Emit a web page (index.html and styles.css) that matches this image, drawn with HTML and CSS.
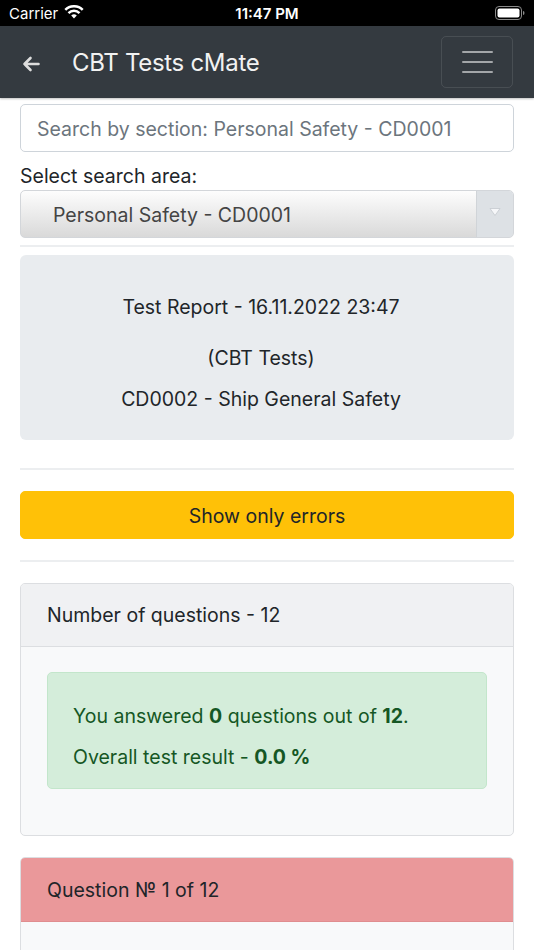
FILE: index.html
```html
<!DOCTYPE html>
<html>
<head>
<meta charset="utf-8">
<link rel="stylesheet" href="styles.css">
</head>
<body>
<div class="status">
  <div class="status-left">Carrier
    <svg class="wifi" width="20" height="14" viewBox="0 0 20 14"><path d="M10 13.5 L7.2 10.6 A4 4 0 0 1 12.8 10.6 Z" fill="#fff"/><path d="M3.6 7.2 A9 9 0 0 1 16.4 7.2 L14.6 9 A6.4 6.4 0 0 0 5.4 9 Z" fill="#fff"/><path d="M0.4 4 A13.5 13.5 0 0 1 19.6 4 L17.8 5.8 A11 11 0 0 0 2.2 5.8 Z" fill="#fff"/></svg>
  </div>
  <div class="status-time">11:47 PM</div>
  <div class="status-right">
    <svg width="30" height="14" viewBox="0 0 30 14"><rect x="0.5" y="0.5" width="26" height="13" rx="3.5" fill="none" stroke="#8a8a8a"/><rect x="2.5" y="2.5" width="22" height="9" rx="2" fill="#fff"/><path d="M28 5 Q29.5 5 29.5 7 Q29.5 9 28 9 Z" fill="#8a8a8a"/></svg>
  </div>
</div>
<nav class="navbar">
  <svg class="back" width="18" height="16" viewBox="0 0 18 16"><path d="M16.5 8 H2.5 M8.5 2 L2.5 8 L8.5 14" fill="none" stroke="#ddd" stroke-width="2.6" stroke-linecap="round" stroke-linejoin="round"/></svg>
  <div class="brand">CBT Tests cMate</div>
  <button class="toggler"><span></span><span></span><span></span></button>
</nav>
<main class="content">
  <input class="search" type="text" placeholder="Search by section: Personal Safety - CD0001">
  <label class="label">Select search area:</label>
  <div class="select">
    <span class="select-text">Personal Safety - CD0001</span>
    <span class="select-arrow"><svg width="12" height="10" viewBox="0 0 12 10"><path d="M1 1.5 H11 L6 8.5 Z" fill="#f6f7f9" stroke="#c4c9ce" stroke-width="0.8" stroke-linejoin="round"/></svg></span>
  </div>
  <hr class="rule first">
  <div class="report">
    <p class="r1">Test Report - 16.11.2022 23:47</p>
    <p class="r2">(CBT Tests)</p>
    <p class="r3">CD0002 - Ship General Safety</p>
  </div>
  <hr class="rule second">
  <button class="btn-warning">Show only errors</button>
  <hr class="rule third">
  <div class="card">
    <div class="card-header">Number of questions - 12</div>
    <div class="card-body">
      <div class="alert">
        <p class="a1">You answered <b>0</b> questions out of <b>12</b>.</p>
        <p class="a2">Overall test result - <b>0.0 %</b></p>
      </div>
    </div>
  </div>
  <div class="card question">
    <div class="card-header danger">Question № 1 of 12</div>
    <div class="card-body tall"></div>
  </div>
</main>
</body>
</html>
```
FILE: styles.css
```css
* { box-sizing: border-box; }
html, body { margin: 0; padding: 0; background: #fff; }
body { font-family: Inter, "Noto Sans", "Liberation Sans", sans-serif; color: #212529; width: 534px; height: 950px; overflow: hidden; }

.status { height: 26px; background: #000; color: #fff; display: flex; align-items: center; justify-content: space-between; padding: 0 9px; font-size: 15px; position: relative; }
.status-left { display: flex; align-items: center; gap: 6px; }
.wifi { margin-top: -2px; }
.status-time { position: absolute; left: 0; right: 0; text-align: center; font-weight: 600; pointer-events: none; }
.status-right { display: flex; align-items: center; }

.navbar { height: 72px; background: #343a40; display: flex; align-items: center; padding: 0 21px 0 22px; box-shadow: 0 1px 2px rgba(0,0,0,.25); position: relative; }
.back { flex: none; margin-top: 4px; }
.brand { color: #f2f2f2; font-size: 24px; margin-left: 32px; flex: 1; letter-spacing: -0.3px; }
.toggler { width: 72px; height: 52px; background: transparent; border: 1px solid rgba(255,255,255,.1); border-radius: 5px; display: flex; flex-direction: column; align-items: center; justify-content: center; gap: 8px; padding: 0; }
.toggler span { display: block; width: 31px; height: 2px; background: #a3a6a9; border-radius: 1px; }

.content { padding: 6px 20px 0; }
.search { display: block; width: 100%; height: 48px; border: 1px solid #ced4da; border-radius: 5px; padding: 2px 16px 0; font-family: inherit; font-size: 19.5px; color: #495057; background: #fff; outline: none; }
.search::placeholder { color: #6c757d; }
.label { display: block; font-size: 19.5px; line-height: 24px; margin-top: 12px; margin-bottom: 2px; color: #212529; }
.select { height: 48px; border: 1px solid #d3d6da; border-radius: 5px; display: flex; align-items: stretch; overflow: hidden; background: linear-gradient(#fdfdfd, #d9d9d9); }
.select-text { flex: 1; display: flex; align-items: center; padding-left: 32px; padding-top: 2px; font-size: 19.5px; color: #444; }
.select-arrow { width: 37px; background: #dde1e5; border-left: 1px solid #d0d4d8; display: flex; align-items: center; justify-content: center; padding-bottom: 4px; }

.rule { border: 0; height: 2px; background: #eceef0; margin: 0; }
.rule.first { margin-top: 7px; margin-bottom: 8px; }
.rule.second { margin-top: 28px; margin-bottom: 21px; }
.rule.third { margin-top: 21px; margin-bottom: 21px; }

.report { background: #e9ecef; border-radius: 6px; text-align: center; padding: 40px 12px 29px 0; font-size: 19.5px; line-height: 24px; }
.report p { margin: 0; }
.report .r1 { margin-bottom: 27px; }
.report .r2 { margin-bottom: 17px; }

.btn-warning { display: block; width: 100%; height: 48px; background: #ffc107; border: 1px solid #ffc107; border-radius: 5px; font-family: inherit; font-size: 19.5px; color: #212529; padding: 2px 0 0; }

.card { border: 1px solid #dcdee1; border-radius: 5px; overflow: hidden; background: #f8f9fa; }
.card-header { height: 63px; background: #f0f1f3; border-bottom: 1px solid #dcdee1; display: flex; align-items: center; padding-left: 26px; font-size: 19.5px; }
.card-body { padding: 25px 26px 46px; }
.alert { background: #d4edda; border: 1px solid #c3e6cb; border-radius: 5px; color: #155724; padding: 31px 25px 19px; font-size: 19.5px; line-height: 24px; }
.alert p { margin: 0; }
.alert .a1 { margin-bottom: 17px; }
.alert b { font-weight: 700; }

.question { margin-top: 21px; }
.card-header.danger { background: #ea989a; border-bottom-color: #e08d8f; height: 64px; }
.card-body.tall { height: 80px; }
```
